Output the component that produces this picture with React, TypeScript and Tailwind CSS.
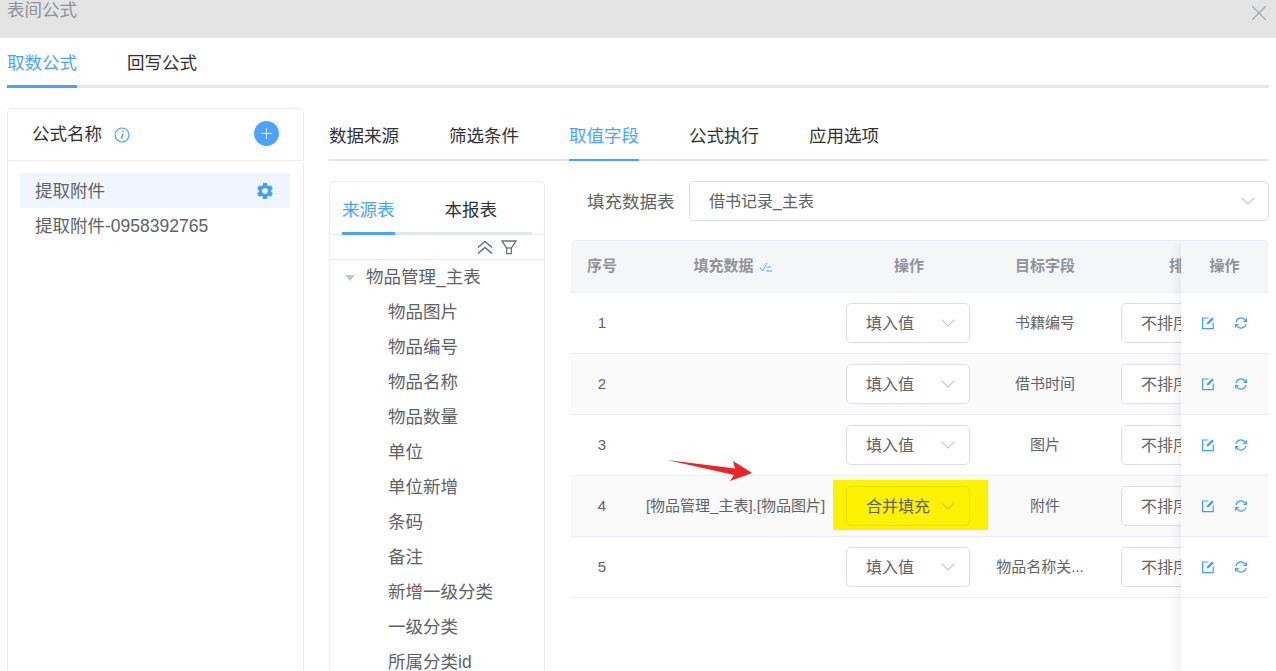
import React from "react";
import { Plus, X } from "lucide-react";
import { MdSettings } from "react-icons/md";

const fields = [
    "物品图片",
    "物品编号",
    "物品名称",
    "物品数量",
    "单位",
    "单位新增",
    "条码",
    "备注",
    "新增一级分类",
    "一级分类",
    "所属分类id",
];

const rows = [
    { no: 1, data: "", op: "填入值", target: "书籍编号" },
    { no: 2, data: "", op: "填入值", target: "借书时间" },
    { no: 3, data: "", op: "填入值", target: "图片" },
    { no: 4, data: "[物品管理_主表].[物品图片]", op: "合并填充", target: "附件" },
    { no: 5, data: "", op: "填入值", target: "物品名称关..." },
];

const EditIcon = () => (
    <svg width="14" height="14" viewBox="0 0 14 14" fill="none" stroke="#409eff" strokeWidth="1.2">
        <path d="M7.5 2H1.6v10.6h10.6V6.6" />
        <path d="M5.6 8.6l.5-2.2L11 1.4l1.8 1.7-4.9 5z" fill="#409eff" stroke="none" />
    </svg>
);

const RefreshIcon = () => (
    <svg width="14" height="14" viewBox="0 0 14 14" fill="none" stroke="#409eff" strokeWidth="1.2">
        <path d="M2 6a5 5 0 0 1 8.7-2.3L12 5" />
        <path d="M12 8a5 5 0 0 1-8.7 2.3L2 9" />
        <path d="M12.3 2.2V5.3H9.4" />
        <path d="M1.7 11.8V8.7h2.9" />
    </svg>
);

const SortCheckIcon = () => (
    <svg width="14" height="10" viewBox="0 0 14 10" fill="none" stroke="#409eff" strokeWidth="0.9">
        <path d="M1 6l2.5 3L8 1" />
        <path d="M8 5h4M7 9h6" />
    </svg>
);

const FunnelIcon = () => (
    <svg width="16" height="15" viewBox="0 0 16 15" fill="none" stroke="#6b6f76" strokeWidth="1.3">
        <path d="M1 1h14l-4.6 7v5.6H5.6V8z" />
        <path d="M5.6 8h4.8" />
    </svg>
);

const CollapseIcon = () => (
    <svg width="16" height="15" viewBox="0 0 16 15" fill="none" stroke="#6b6f76" strokeWidth="1.6">
        <path d="M1 7.5L8 1.5l7 6" />
        <path d="M1 13.5l7-6 7 6" />
    </svg>
);

const InfoIcon = () => (
    <svg width="16" height="16" viewBox="0 0 16 16" fill="none" stroke="#409eff" strokeWidth="1.1">
        <circle cx="8" cy="8" r="7" />
        <path d="M8.9 6.6L7.4 12" strokeWidth="1.5" />
        <path d="M9.1 3.6l-.3 1.4" strokeWidth="1.6" />
    </svg>
);

const Chevron = ({ color }: { color: string }) => (
    <svg width="14" height="8" viewBox="0 0 14 8" fill="none" stroke={color} strokeWidth="1.1" className="shrink-0">
        <path d="M.6.6L7 7l6.4-6.4" />
    </svg>
);

const Select = ({ label, yellow }: { label: string; yellow?: boolean }) => (
    <div
        className={`flex items-center justify-between w-[124px] h-10 pl-[19px] pr-[14px] rounded-[5px] border text-[16px] text-[#606266] ${
            yellow ? "border-[#e6da0a]" : "border-[#dcdfe6] bg-white"
        }`}>
        <span className="whitespace-nowrap pt-[2px]">{label}</span>
        <Chevron color={yellow ? "#cfc63a" : "#c0c4cc"} />
    </div>
);

export default function App() {
    return (
        <div className="relative h-[671px] overflow-hidden bg-white font-['Liberation_Sans','Noto_Sans_CJK_SC',sans-serif]">
            <div className="flex items-start justify-between h-[38px] bg-[#e4e4e4] pl-[7px] pr-[4px]">
                <span className="text-[17.5px] leading-[20px] text-[#909399]">表间公式</span>
                <X className="w-[26px] h-[26px] text-[#a3a6ab]" strokeWidth={1.1} />
            </div>

            <div className="mx-[7px] flex gap-[50px] h-[50px] border-b-[3px] border-[#e4e7ed] text-[17.5px]">
                <div className="h-[50px] border-b-[3px] border-[#4ba3ff] text-[#4ba3ff] leading-[51px]">取数公式</div>
                <div className="text-[#303133] leading-[51px]">回写公式</div>
            </div>

            <div className="flex pl-[7px] pr-[7px] pt-[20px] gap-[25px]">
                <div className="w-[297px] h-[600px] shrink-0 rounded-[5px] border border-[#ebeef5]">
                    <div className="flex items-center h-[52px] pl-[24px] pr-[24px] border-b border-[#ebeef5]">
                        <span className="text-[17.5px] text-[#303133]">公式名称</span>
                        <span className="ml-[12px]">
                            <InfoIcon />
                        </span>
                        <div className="ml-auto mb-[2px] flex items-center justify-center w-[25px] h-[25px] rounded-full bg-[#4ba3ff]">
                            <Plus className="w-[17px] h-[17px] text-white" strokeWidth={1.2} />
                        </div>
                    </div>
                    <div className="pl-3 pr-[13px] pt-3 text-[17.5px] text-[#606266]">
                        <div className="flex items-center justify-between h-[35px] pl-[15px] pr-[15px] bg-[#eff6ff]">
                            <span className="pt-[2px]">提取附件</span>
                            <MdSettings className="w-[20px] h-[20px] text-[#409eff]" />
                        </div>
                        <div className="flex items-center h-[35px] pl-[15px] pt-[2px]">提取附件-0958392765</div>
                    </div>
                </div>

                <div className="flex-1 min-w-0">
                    <div className="flex gap-[50px] h-[53px] border-b-[2px] border-[#e4e7ed] text-[17.5px] text-[#303133]">
                        <div className="leading-[56px]">数据来源</div>
                        <div className="leading-[56px]">筛选条件</div>
                        <div className="h-[53px] border-b-[2px] border-[#4ba3ff] text-[#4ba3ff] leading-[56px]">取值字段</div>
                        <div className="leading-[56px]">公式执行</div>
                        <div className="leading-[56px]">应用选项</div>
                    </div>

                    <div className="flex pt-[20px] gap-[25px]">
                        <div className="w-[216px] h-[520px] shrink-0 rounded-[5px] border border-[#ebeef5]">
                            <div className="h-[53px] border-b border-[#ebeef5] px-3">
                                <div className="flex gap-[50px] h-[53px] border-b-[3px] border-[#e4e7ed] text-[17.5px]">
                                    <div className="h-[53px] border-b-[3px] border-[#4ba3ff] text-[#4ba3ff] leading-[56px]">来源表</div>
                                    <div className="text-[#303133] leading-[56px]">本报表</div>
                                </div>
                            </div>
                            <div className="flex items-center justify-end gap-[8px] h-[25px] pr-[27px] border-b border-[#ebeef5]">
                                <CollapseIcon />
                                <FunnelIcon />
                            </div>
                            <div className="text-[17.5px] text-[#606266]">
                                <div className="flex items-center h-[35px] pl-[15px]">
                                    <span className="w-0 h-0 border-x-[5px] border-x-transparent border-t-[6px] border-t-[#c0c4cc] mr-[11px]" />
                                    物品管理_主表
                                </div>
                                {fields.map((field) => (
                                    <div key={field} className="flex items-center h-[35px] pl-[58px]">
                                        {field}
                                    </div>
                                ))}
                            </div>
                        </div>

                        <div className="flex-1 min-w-0">
                            <div className="flex items-center h-10 pl-[17px]">
                                <span className="w-[102px] shrink-0 pt-[2px] text-[17.5px] text-[#606266] whitespace-nowrap">填充数据表</span>
                                <div className="flex-1 flex items-center justify-between h-10 pl-[19px] pr-[13px] rounded-[5px] border border-[#dcdfe6] text-[16px] text-[#606266]">
                                    <span className="pt-[2px]">借书记录_主表</span>
                                    <Chevron color="#c0c4cc" />
                                </div>
                            </div>

                            <div className="flex mt-[19px] h-[440px] rounded-t-[5px] border-t border-x border-t-[#ebeef5] border-x-transparent overflow-hidden">
                                <div className="flex-1 min-w-0 overflow-hidden">
                                    <div className="flex items-center h-[52px] bg-[#f5f6f8] border-b border-[#ebeef5] text-[15px] font-bold text-[#909399]">
                                        <div className="w-[62px] shrink-0 text-center">序号</div>
                                        <div className="w-[200px] shrink-0 flex items-center justify-center gap-[5px]">
                                            填充数据
                                            <SortCheckIcon />
                                        </div>
                                        <div className="w-[152px] shrink-0 text-center">操作</div>
                                        <div className="w-[120px] shrink-0 text-center">目标字段</div>
                                        <div className="w-[158px] shrink-0 text-center whitespace-nowrap">排序</div>
                                    </div>
                                    {rows.map((row) => (
                                        <div
                                            key={row.no}
                                            className={`flex items-center h-[61px] border-b border-[#ebeef5] text-[15px] text-[#606266] ${
                                                row.no % 2 === 0 ? "bg-[#fafafa]" : "bg-white"
                                            }`}>
                                            <div className="w-[62px] shrink-0 text-center">{row.no}</div>
                                            <div className="w-[200px] shrink-0 pl-[5px] text-center whitespace-nowrap">{row.data}</div>
                                            <div className="w-[152px] shrink-0">
                                                {row.no === 4 ? (
                                                    <div className="flex items-center w-[155px] h-[50px] mb-[2px] pt-[2px] pl-[13px] bg-[#fff200]">
                                                        <Select label={row.op} yellow />
                                                    </div>
                                                ) : (
                                                    <div className="pl-[13px]">
                                                        <Select label={row.op} />
                                                    </div>
                                                )}
                                            </div>
                                            <div className={`w-[120px] shrink-0 text-center whitespace-nowrap ${row.no === 5 ? "pr-[10px]" : ""}`}>{row.target}</div>
                                            <div className="pl-[16px] shrink-0">
                                                <Select label="不排序" />
                                            </div>
                                        </div>
                                    ))}
                                </div>

                                <div className="w-[87px] shrink-0 bg-white shadow-[-6px_0_8px_-2px_rgba(0,0,0,0.06)] z-10">
                                    <div className="flex items-center justify-center h-[52px] bg-[#f5f6f8] border-b border-[#ebeef5] text-[15px] font-bold text-[#909399]">
                                        操作
                                    </div>
                                    {rows.map((row) => (
                                        <div
                                            key={row.no}
                                            className={`flex items-center justify-center gap-[19px] h-[61px] border-b border-[#ebeef5] ${
                                                row.no % 2 === 0 ? "bg-[#fafafa]" : "bg-white"
                                            }`}>
                                            <EditIcon />
                                            <RefreshIcon />
                                        </div>
                                    ))}
                                </div>
                            </div>
                        </div>
                    </div>
                </div>
            </div>

            <svg className="absolute left-[667px] top-[460px]" width="86" height="22" viewBox="0 0 86 22">
                <path d="M0 0L68 8.5L66 1L85 13L63 21L67 15z" fill="#ee2229" />
            </svg>
        </div>
    );
}
